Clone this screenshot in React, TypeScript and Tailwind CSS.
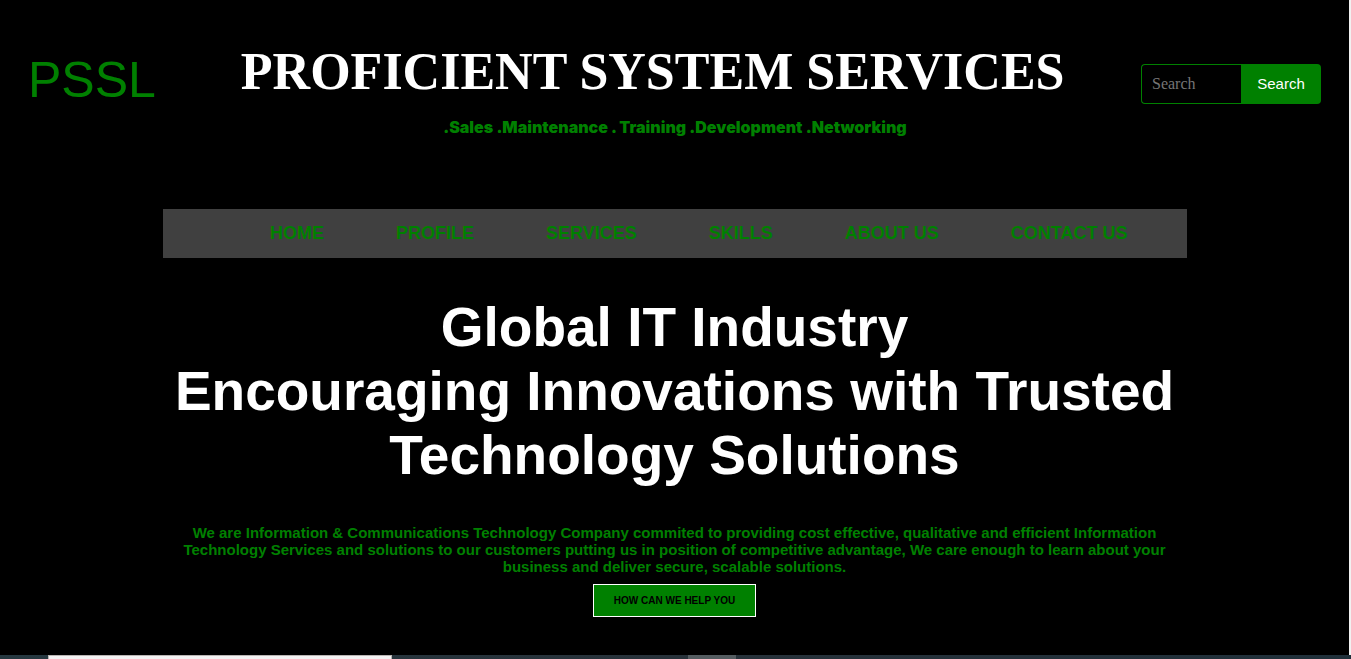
const links = ["HOME", "PROFILE", "SERVICES", "SKILLS", "ABOUT US", "CONTACT US"];

function Header() {
  return (
    <header className="flex items-start px-7 pt-10">
      <a href="#home" className="pt-[11px] text-[50px] leading-[58px] text-[#008000]">
        PSSL
      </a>
      <div className="grow pr-8 pl-[85px]">
        <h1 className="pt-0.5 font-['Liberation_Serif',serif] text-[52px] leading-[60px] font-bold whitespace-nowrap text-white">
          PROFICIENT SYSTEM SERVICES
        </h1>
        <p className="pt-3.5 text-center font-['Inter',sans-serif] text-base leading-[22px] font-black text-[#008000]">
          .Sales .Maintenance . Training .Development .Networking
        </p>
      </div>
      <form className="mt-6 flex h-10 w-[180px] shrink-0" onSubmit={(e) => e.preventDefault()}>
        <input
          type="search"
          aria-label="Search"
          placeholder="Search"
          className="w-[100px] rounded-l border border-r-0 border-[#008000] bg-black px-2.5 font-['Liberation_Serif',serif] text-base text-white outline-none placeholder:text-[#757575]"
        />
        <button type="submit" className="grow rounded-r bg-[#008000] text-[15px] text-white">
          Search
        </button>
      </form>
    </header>
  );
}

function Nav() {
  return (
    <nav className="mx-auto mt-[71px] w-full max-w-5xl bg-[#404040] pb-0.5">
      <ul className="flex h-[47px] items-center justify-end gap-[72px] pr-[59px] text-lg font-bold whitespace-nowrap text-[#008000]">
        {links.map((link) => (
          <li key={link}>
            <a href={"#" + link.toLowerCase().replace(" ", "-")}>{link}</a>
          </li>
        ))}
      </ul>
    </nav>
  );
}

function Hero() {
  return (
    <section className="mx-auto flex w-full max-w-5xl flex-col items-center pt-[37px] text-center">
      <h2 className="text-[55px] leading-[64px] font-bold text-white">
        Global IT Industry
        <br />
        Encouraging Innovations with Trusted Technology Solutions
      </h2>
      <p className="px-4 pt-[37px] text-[15px] leading-[17px] font-bold text-[#008000]">
        We are Information &amp; Communications Technology Company commited to providing cost effective, qualitative and
        efficient Information Technology Services and solutions to our customers putting us in position of competitive
        advantage, We care enough to learn about your business and deliver secure, scalable solutions.
      </p>
      <button
        type="button"
        className="mt-[9px] h-[33px] border border-white bg-[#008000] px-5 text-[10px] font-bold whitespace-nowrap text-black"
      >
        HOW CAN WE HELP YOU
      </button>
    </section>
  );
}

function Taskbar() {
  return (
    <div className="flex h-1 bg-linear-to-r from-[#263840] via-[#28323a] to-[#20303a]">
      <div className="ml-12 w-[344px] border-x border-t border-[#b8b4b2] bg-[#f4f2f2]" />
      <div className="ml-[296px] w-12 bg-[#545c60]" />
    </div>
  );
}

export default function App() {
  return (
    <div className="flex min-h-screen flex-col bg-black font-['Liberation_Sans',Arial,sans-serif]">
      <div className="flex grow flex-col border-r-2 border-[#f1f1f1]">
        <Header />
        <main>
          <Nav />
          <Hero />
        </main>
      </div>
      <Taskbar />
    </div>
  );
}
